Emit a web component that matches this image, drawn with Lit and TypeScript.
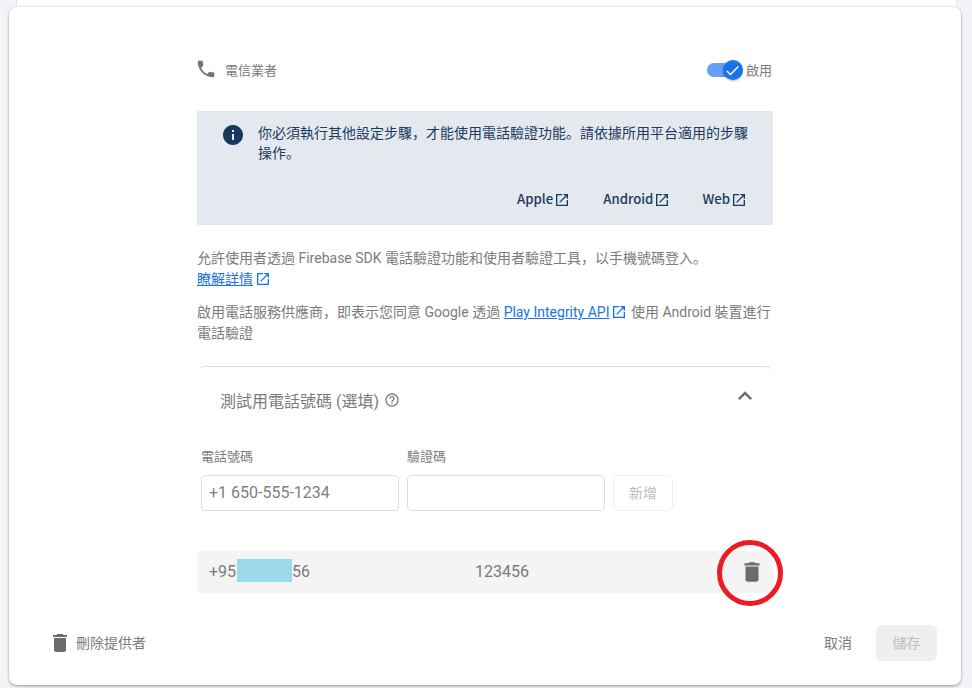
import { LitElement, html, css, svg } from "lit";
import { customElement } from "lit/decorators.js";

const icon = (d: string, cls: string) => html`<svg class=${cls} viewBox="0 0 24 24" fill="currentColor"><path d=${d}></path></svg>`;
const TRASH = "M6 19c0 1.1.9 2 2 2h8c1.1 0 2-.9 2-2V7H6v12zM19 4h-3.5l-1-1h-5l-1 1H5v2h14V4z";
const PHONE = "M6.62 10.79c1.44 2.83 3.76 5.14 6.59 6.59l2.2-2.2c.27-.27.67-.36 1.02-.24 1.12.37 2.33.57 3.57.57.55 0 1 .45 1 1V20c0 .55-.45 1-1 1-9.39 0-17-7.61-17-17 0-.55.45-1 1-1h3.5c.55 0 1 .45 1 1 0 1.25.2 2.45.57 3.57.11.35.03.74-.25 1.02l-2.2 2.2z";
const OPEN = "M19 19H5V5h7V3H3v18h18v-9h-2v7zM14 3v2h3.59l-9.83 9.83 1.41 1.41L19 6.41V10h2V3h-7z";
const HELP = "M11 18h2v-2h-2v2zm1-16C6.48 2 2 6.48 2 12s4.48 10 10 10 10-4.48 10-10S17.52 2 12 2zm0 18c-4.41 0-8-3.59-8-8s3.59-8 8-8 8 3.59 8 8-3.59 8-8 8zm0-14c-2.21 0-4 1.79-4 4h2c0-1.1.9-2 2-2s2 .9 2 2c0 2-3 1.75-3 5h2c0-2.25 3-2.5 3-5 0-2.21-1.79-4-4-4z";
const CHEV = "M12 8l-6 6 1.41 1.41L12 10.83l4.59 4.58L18 14z";
const INFO = "M12 2C6.48 2 2 6.48 2 12s4.48 10 10 10 10-4.48 10-10S17.52 2 12 2zm1 15h-2v-6h2v6zm0-8h-2V7h2v2z";
const CHECK = "M9 16.2L4.8 12l-1.4 1.4L9 19 21 7l-1.4-1.4L9 16.2z";

@customElement("app-root")
export class AppRoot extends LitElement {
  static styles = css`
    :host {
      display: block;
      width: 972px;
      height: 688px;
      overflow: hidden;
      background: #f3f4f7;
      font-family: Roboto, "Noto Sans CJK SC", sans-serif;
      color: #7b7b7b;
      font-size: 14px;
    }
    svg { display: block; flex: none; }
    .behind {
      height: 6px;
      margin: 0 15px 0 16px;
      background: #fff;
      border: 1px solid #e4e4e4;
      border-width: 0 1px;
    }
    .card {
      margin: 1px 11px 0 9px;
      height: 678px;
      box-sizing: border-box;
      background: #fff;
      border-radius: 8px;
      box-shadow: 0 1px 3px rgba(0,0,0,.4);
      padding: 0 24px 0 39px;
      display: flex;
      flex-direction: column;
    }
    .body { width: 576px; margin-left: 149px; flex: 1; }
    .head { display: flex; align-items: center; height: 22px; margin-top: 52px; font-size: 13px; }
    .head span { padding-bottom: 2px; }
    .phone { width: 22px; height: 22px; margin-left: -2px; margin-top: -2px; color: #757575; }
    .head .name { margin-left: 8px; flex: 1; }
    .track { width: 31px; height: 14px; border-radius: 7px; background: #669df6; position: relative; margin-right: 8px; }
    .thumb {
      position: absolute; left: 16px; top: -3px;
      width: 20px; height: 20px; border-radius: 50%;
      background: #1a73e8; color: #fff;
      box-shadow: 0 1px 2px rgba(0,0,0,.3);
      display: flex; align-items: center; justify-content: center;
    }
    .thumb svg { width: 17px; height: 17px; }
    .enable { margin-right: 1px; }
    .info {
      margin-top: 30px;
      height: 114px;
      box-sizing: border-box;
      background: #e4e8ef;
      color: #1c3a5e;
      padding: 12px 26px 0 24px;
      display: flex;
      flex-direction: column;
    }
    .info-top { display: flex; gap: 13px; line-height: 20px; margin-right: -1px; }
    .info-icon { width: 24px; height: 24px; color: #17375e; }
    .info-links { margin-top: auto; height: 36px; display: flex; justify-content: flex-end; gap: 32px; font-family: "Noto Sans CJK SC", sans-serif; font-size: 13.2px; font-weight: 500; }
    .info-link { display: flex; align-items: flex-start; gap: 1px; line-height: 20px; }
    .info-link:first-child { margin-right: 1px; }
    .info-link svg { width: 16px; height: 16px; margin-top: 3px; }
    p { margin: 0; line-height: 21px; }
    .p1 { margin-top: 23px; }
    .p2 { margin-top: 12px; }
    a { color: #1a73e8; text-decoration: underline; }
    .ext { display: inline-block; width: 16px; height: 16px; vertical-align: -3px; margin-left: 2px; color: #1a73e8; }
    .acc {
      margin-top: 22px;
      border-top: 1px solid #e0e0e0;
      border-left: 1px solid transparent;
      border-right: 1px solid transparent;
      border-radius: 8px 8px 0 0;
    }
    .acc-head { display: flex; align-items: center; height: 66px; padding-left: 22px; font-size: 16px; }
    .help { width: 16px; height: 16px; margin-left: 5px; }
    .chev { width: 28px; height: 28px; margin-left: auto; margin-right: 13px; margin-top: -8px; color: #6b6b6b; }
    .form { display: grid; grid-template-columns: 198px 198px 60px; column-gap: 8px; padding: 0 0 0 3px; }
    .lab { font-size: 13px; line-height: 18px; height: 27px; margin-top: 15px; }
    .field {
      height: 36px; box-sizing: border-box;
      border: 1px solid #dcdcdc; border-radius: 5px;
      padding-left: 7px; font-size: 16px; line-height: 34px; color: #808080;
    }
    .add {
      height: 36px; box-sizing: border-box;
      border: 1px solid #eeeeee; border-radius: 6px;
      display: flex; align-items: center; justify-content: center;
      color: #bdbdbd; font-size: 14px; padding-bottom: 2px;
    }
    .row {
      position: relative;
      margin-top: 40px;
      height: 42px;
      background: #f4f4f4;
      border-radius: 0 0 4px 4px;
      display: flex;
      align-items: center;
      padding-left: 12px;
      padding-bottom: 1px;
      box-sizing: border-box;
      font-size: 16px;
    }
    .num { width: 266px; display: flex; align-items: center; }
    .mask { width: 55px; height: 23px; background: #9bd9eb; margin: 0 0 2px 1px; }
    .row-trash { position: absolute; left: 542px; top: 8px; width: 26px; height: 26px; color: #6b6b6b; }
    .circle { position: absolute; left: 520px; top: -11px; width: 66px; height: 66px; overflow: visible; }
    .foot { display: flex; align-items: center; height: 36px; margin-bottom: 24px; }
    .foot span { padding-bottom: 3px; box-sizing: border-box; }
    .del { width: 24px; height: 24px; margin-right: 4px; color: #6b6b6b; }
    .cancel { margin-left: auto; margin-right: 24px; }
    .foot .save {
      width: 61px; height: 36px; border-radius: 6px; background: #efefef; color: #bdbdbd;
      display: flex; align-items: center; justify-content: center;
    }
  `;

  render() {
    return html`
      <div class="behind"></div>
      <div class="card">
        <div class="body">
          <div class="head">
            ${icon(PHONE, "phone")}
            <span class="name">電信業者</span>
            <div class="track"><div class="thumb">${icon(CHECK, "")}</div></div>
            <span class="enable">啟用</span>
          </div>
          <div class="info">
            <div class="info-top">
              ${icon(INFO, "info-icon")}
              <div>你必須執行其他設定步驟，才能使用電話驗證功能。請依據所用平台適用的步驟操作。</div>
            </div>
            <div class="info-links">
              <span class="info-link">Apple${icon(OPEN, "")}</span>
              <span class="info-link">Android${icon(OPEN, "")}</span>
              <span class="info-link">Web${icon(OPEN, "")}</span>
            </div>
          </div>
          <p class="p1">允許使用者透過 Firebase SDK 電話驗證功能和使用者驗證工具，以手機號碼登入。<br /><a href="#">瞭解詳情</a>${icon(OPEN, "ext")}</p>
          <p class="p2">啟用電話服務供應商，即表示您同意 Google 透過 <a href="#">Play Integrity API</a>${icon(OPEN, "ext")} 使用 Android 裝置進行電話驗證</p>
          <div class="acc">
            <div class="acc-head">
              <span>測試用電話號碼 (選填)</span>
              ${icon(HELP, "help")}
              ${icon(CHEV, "chev")}
            </div>
            <div class="form">
              <div class="lab">電話號碼</div>
              <div class="lab">驗證碼</div>
              <div></div>
              <div class="field">+1 650-555-1234</div>
              <div class="field"></div>
              <div class="add">新增</div>
            </div>
          </div>
          <div class="row">
            <div class="num">+95<span class="mask"></span>56</div>
            <div>123456</div>
            ${icon(TRASH, "row-trash")}
            <svg class="circle" viewBox="0 0 66 66">
              ${svg`<circle cx="33" cy="33" r="30.5" fill="none" stroke="#ed1c24" stroke-width="5"></circle>`}
            </svg>
          </div>
        </div>
        <div class="foot">
          ${icon(TRASH, "del")}
          <span>刪除提供者</span>
          <span class="cancel">取消</span>
          <span class="save">儲存</span>
        </div>
      </div>
    `;
  }
}
